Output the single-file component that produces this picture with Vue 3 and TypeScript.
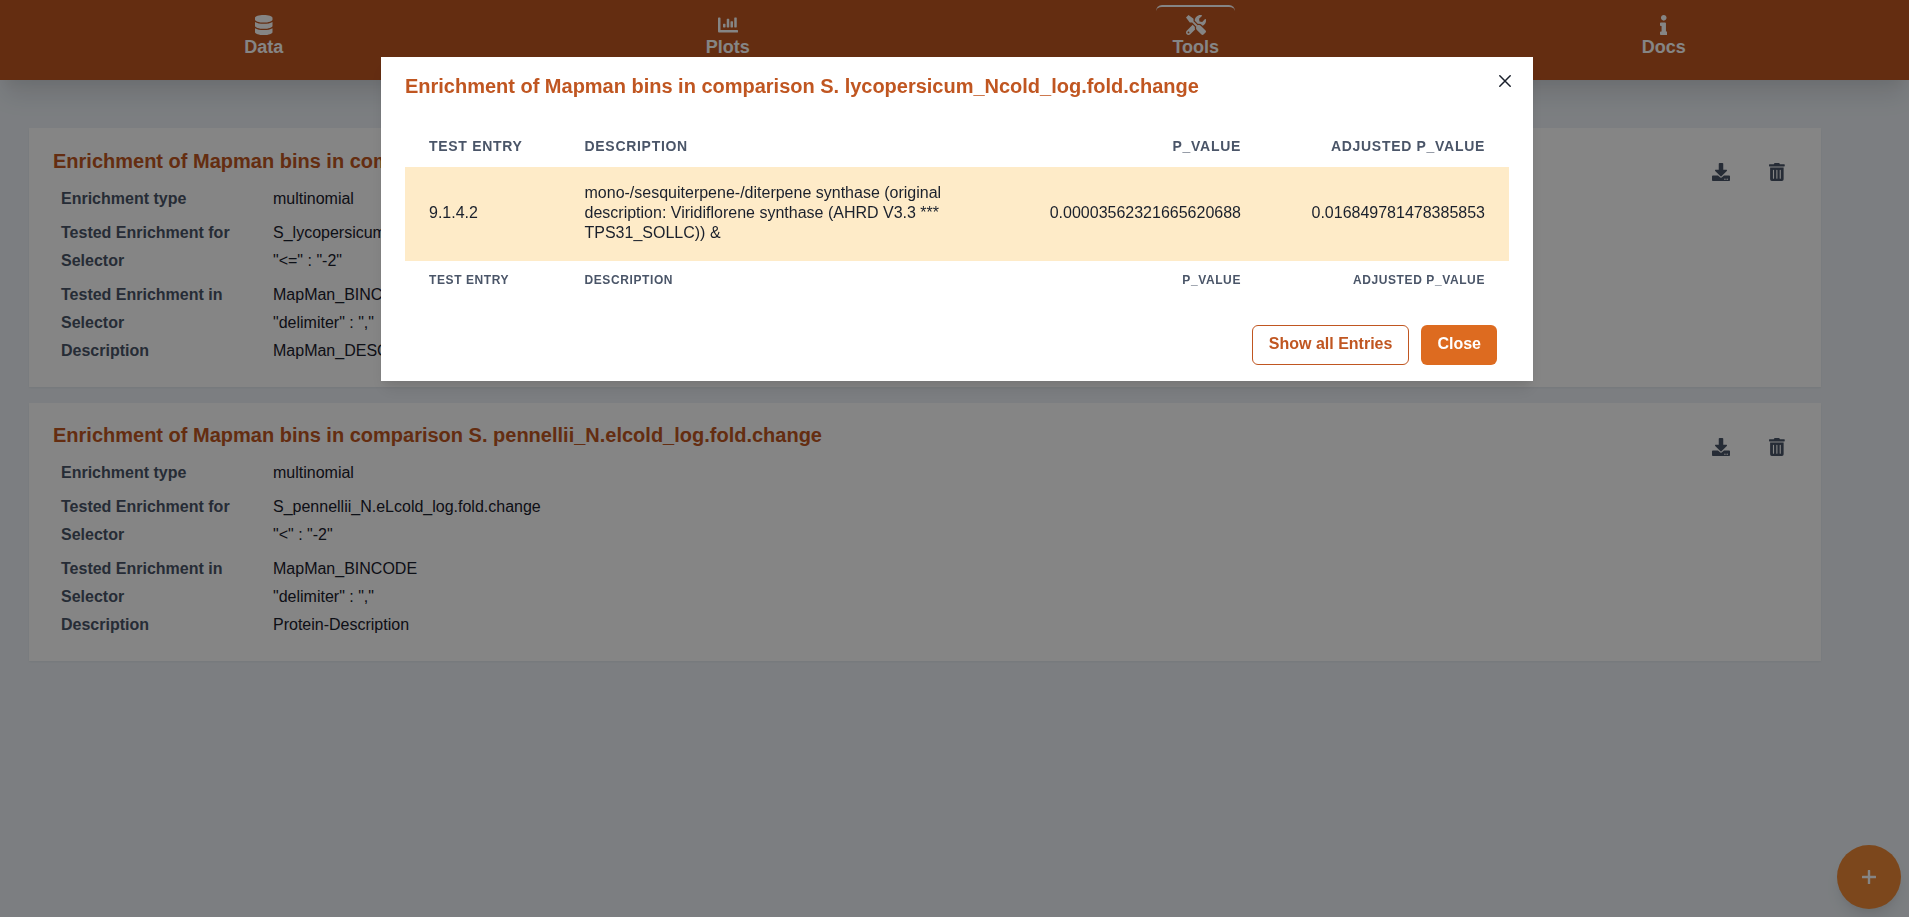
<script setup lang="ts">
interface NavItem {
  label: string
  viewBox: string
  path: string
  active?: boolean
}
interface Field {
  label: string
  value: string
}
interface Enrichment {
  title: string
  groups: Field[][]
}

const navItems: NavItem[] = [
  {
    label: 'Data',
    viewBox: '0 0 448 512',
    path: 'M448 73.143v45.714C448 159.143 347.667 192 224 192S0 159.143 0 118.857V73.143C0 32.857 100.333 0 224 0s224 32.857 224 73.143zM448 176v102.857C448 319.143 347.667 352 224 352S0 319.143 0 278.857V176c48.125 33.143 136.208 48.572 224 48.572S399.874 209.143 448 176zm0 160v102.857C448 479.143 347.667 512 224 512S0 479.143 0 438.857V336c48.125 33.143 136.208 48.572 224 48.572S399.874 369.143 448 336z',
  },
  {
    label: 'Plots',
    viewBox: '0 0 512 512',
    path: 'M332.8 320h38.4c6.4 0 12.8-6.4 12.8-12.8V172.8c0-6.4-6.4-12.8-12.8-12.8h-38.4c-6.4 0-12.8 6.4-12.8 12.8v134.4c0 6.4 6.4 12.8 12.8 12.8zm96 0h38.4c6.4 0 12.8-6.4 12.8-12.8V76.8c0-6.4-6.4-12.8-12.8-12.8h-38.4c-6.4 0-12.8 6.4-12.8 12.8v230.4c0 6.4 6.4 12.8 12.8 12.8zm-288 0h38.4c6.4 0 12.8-6.4 12.8-12.8v-70.4c0-6.4-6.4-12.8-12.8-12.8h-38.4c-6.4 0-12.8 6.4-12.8 12.8v70.4c0 6.4 6.4 12.8 12.8 12.8zm96 0h38.4c6.4 0 12.8-6.4 12.8-12.8V108.8c0-6.4-6.4-12.8-12.8-12.8h-38.4c-6.4 0-12.8 6.4-12.8 12.8v198.4c0 6.4 6.4 12.8 12.8 12.8zM496 384H64V80c0-8.84-7.16-16-16-16H16C7.16 64 0 71.16 0 80v336c0 17.67 14.33 32 32 32h464c8.84 0 16-7.16 16-16v-32c0-8.84-7.16-16-16-16z',
  },
  {
    label: 'Tools',
    viewBox: '0 0 512 512',
    path: 'M501.1 395.7L384 278.6c-23.1-23.1-57.6-27.6-85.4-13.9L192 158.1V96L64 0 0 64l96 128h62.1l106.6 106.6c-13.6 27.8-9.2 62.3 13.9 85.4l117.1 117.1c14.6 14.6 38.2 14.6 52.7 0l52.7-52.7c14.5-14.6 14.5-38.2 0-52.7zM331.7 225c28.3 0 54.9 11 74.9 31l19.4 19.4c15.8-6.9 30.8-16.5 43.8-29.5 37.1-37.1 49.7-89.3 37.9-136.7-2.2-9-13.5-12.1-20.1-5.5l-74.4 74.4-67.9-11.3L334 98.9l74.4-74.4c6.6-6.6 3.4-17.9-5.7-20.2-47.4-11.7-99.6.9-136.6 37.9-28.5 28.5-41.9 66.1-41.2 103.6l82.1 82.1c8.1-1.9 16.5-2.9 24.7-2.9zm-103.9 82l-56.7-56.7L18.7 402.8c-25 25-25 65.5 0 90.5s65.5 25 90.5 0l123.6-123.6c-7.6-19.9-9.9-41.6-5-62.7zM64 472c-13.2 0-24-10.8-24-24 0-13.3 10.7-24 24-24s24 10.7 24 24c0 13.2-10.7 24-24 24z',
    active: true,
  },
  {
    label: 'Docs',
    viewBox: '0 0 192 512',
    path: 'M20 424.229h20V279.771H20c-11.046 0-20-8.954-20-20V212c0-11.046 8.954-20 20-20h112c11.046 0 20 8.954 20 20v212.229h20c11.046 0 20 8.954 20 20V492c0 11.046-8.954 20-20 20H20c-11.046 0-20-8.954-20-20v-47.771c0-11.046 8.954-20 20-20zM96 0C56.235 0 24 32.235 24 72s32.235 72 72 72 72-32.235 72-72S135.764 0 96 0z',
  },
]

const enrichments: Enrichment[] = [
  {
    title: 'Enrichment of Mapman bins in comparison S. lycopersicum_Ncold_log.fold.change',
    groups: [
      [{ label: 'Enrichment type', value: 'multinomial' }],
      [
        { label: 'Tested Enrichment for', value: 'S_lycopersicum_Ncold_log.fold.change' },
        { label: 'Selector', value: '"<=" : "-2"' },
      ],
      [
        { label: 'Tested Enrichment in', value: 'MapMan_BINCODE' },
        { label: 'Selector', value: '"delimiter" : ","' },
        { label: 'Description', value: 'MapMan_DESCRIPTION' },
      ],
    ],
  },
  {
    title: 'Enrichment of Mapman bins in comparison S. pennellii_N.elcold_log.fold.change',
    groups: [
      [{ label: 'Enrichment type', value: 'multinomial' }],
      [
        { label: 'Tested Enrichment for', value: 'S_pennellii_N.eLcold_log.fold.change' },
        { label: 'Selector', value: '"<" : "-2"' },
      ],
      [
        { label: 'Tested Enrichment in', value: 'MapMan_BINCODE' },
        { label: 'Selector', value: '"delimiter" : ","' },
        { label: 'Description', value: 'Protein-Description' },
      ],
    ],
  },
]

const columns: string[] = ['Test Entry', 'Description', 'p_value', 'adjusted p_value']
const results: string[][] = [
  [
    '9.1.4.2',
    'mono-/sesquiterpene-/diterpene synthase (original description: Viridiflorene synthase (AHRD V3.3 *** TPS31_SOLLC)) &',
    '0.00003562321665620688',
    '0.016849781478385853',
  ],
]
</script>

<template>
  <div class="page">
    <nav class="navbar">
      <a v-for="item in navItems" :key="item.label" class="nav-item" :class="{ active: item.active }">
        <svg class="nav-icon" :viewBox="item.viewBox" fill="currentColor"><path :d="item.path" /></svg>
        <span class="nav-label">{{ item.label }}</span>
      </a>
    </nav>

    <main class="cards">
      <section v-for="card in enrichments" :key="card.title" class="card">
        <div class="card-body">
          <h2 class="title">{{ card.title }}</h2>
          <dl v-for="(group, g) in card.groups" :key="g" class="group">
            <div v-for="field in group" :key="field.label" class="field">
              <dt>{{ field.label }}</dt>
              <dd>{{ field.value }}</dd>
            </div>
          </dl>
        </div>
        <div class="actions">
          <button class="icon-button" aria-label="Download">
            <svg viewBox="0 0 512 512" fill="currentColor">
              <path d="M216 0h80c13.3 0 24 10.7 24 24v168h87.7c17.8 0 26.7 21.5 14.1 34.1L269.7 378.3c-7.5 7.5-19.8 7.5-27.3 0L90.1 226.1c-12.6-12.6-3.7-34.1 14.1-34.1H192V24c0-13.3 10.7-24 24-24zm296 376v112c0 13.3-10.7 24-24 24H24c-13.3 0-24-10.7-24-24V376c0-13.3 10.7-24 24-24h146.7l49 49c20.1 20.1 52.5 20.1 72.6 0l49-49H488c13.3 0 24 10.7 24 24zm-124 88c0-11-9-20-20-20s-20 9-20 20 9 20 20 20 20-9 20-20zm64 0c0-11-9-20-20-20s-20 9-20 20 9 20 20 20 20-9 20-20z" />
            </svg>
          </button>
          <button class="icon-button" aria-label="Delete">
            <svg viewBox="0 0 448 512" fill="currentColor">
              <path d="M32 464a48 48 0 0 0 48 48h288a48 48 0 0 0 48-48V128H32zm272-256a16 16 0 0 1 32 0v224a16 16 0 0 1-32 0zm-96 0a16 16 0 0 1 32 0v224a16 16 0 0 1-32 0zm-96 0a16 16 0 0 1 32 0v224a16 16 0 0 1-32 0zM432 32H312l-9.4-18.7A24 24 0 0 0 281.1 0H166.8a23.72 23.72 0 0 0-21.4 13.3L136 32H16A16 16 0 0 0 0 48v32a16 16 0 0 0 16 16h416a16 16 0 0 0 16-16V48a16 16 0 0 0-16-16z" />
            </svg>
          </button>
        </div>
      </section>
    </main>

    <button class="fab" aria-label="Add enrichment">
      <svg viewBox="0 0 14 14" fill="currentColor">
        <path d="M6.3 0h1.4q.5 0 .5.5v5.3h5.3q.5 0 .5.5v1.4q0 .5-.5.5H8.2v5.3q0 .5-.5.5H6.3q-.5 0-.5-.5V8.200H.5Q0 8.200 0 7.700V6.300q0-.5.5-.5h5.300V.5q0-.5.5-.5z" />
      </svg>
    </button>

    <div class="overlay">
      <div class="modal" role="dialog">
        <header class="modal-header">
          <h2 class="title">{{ enrichments[0].title }}</h2>
          <button class="close-icon" aria-label="Close dialog">
            <svg viewBox="0 0 12 12" fill="none" stroke="currentColor" stroke-width="1.5" stroke-linecap="round">
              <path d="M.8.8l10.4 10.4M11.2.8L.8 11.2" />
            </svg>
          </button>
        </header>
        <table class="results">
          <colgroup>
            <col class="col-entry" />
            <col class="col-description" />
            <col class="col-p" />
            <col class="col-adjusted" />
          </colgroup>
          <thead>
            <tr>
              <th v-for="(name, i) in columns" :key="name" :class="{ numeric: i > 1 }">{{ name }}</th>
            </tr>
          </thead>
          <tbody>
            <tr v-for="row in results" :key="row[0]">
              <td v-for="(cell, i) in row" :key="i" :class="{ numeric: i > 1 }">{{ cell }}</td>
            </tr>
          </tbody>
          <tfoot>
            <tr>
              <th v-for="(name, i) in columns" :key="name" :class="{ numeric: i > 1 }">{{ name }}</th>
            </tr>
          </tfoot>
        </table>
        <footer class="modal-footer">
          <button class="button outline">Show all Entries</button>
          <button class="button solid">Close</button>
        </footer>
      </div>
    </div>
  </div>
</template>

<style>
body {
  margin: 0;
  background: #edf2f7;
}
</style>

<style scoped>
* {
  box-sizing: border-box;
}
.page {
  min-height: 100vh;
  font-family: 'Liberation Sans', Arial, sans-serif;
  font-size: 16px;
  color: #1a202c;
}
button {
  border: 0;
  background: none;
  font: inherit;
}
.navbar {
  height: 80px;
  display: flex;
  justify-content: space-around;
  align-items: flex-start;
  padding: 5px 12px 0 33px;
  background: #c05621;
  box-shadow: 0 20px 25px -5px rgba(0, 0, 0, 0.1), 0 10px 10px -5px rgba(0, 0, 0, 0.04);
  color: #fff;
}
.nav-item {
  display: flex;
  flex-direction: column;
  align-items: center;
  padding: 8px 16px 0;
  height: 62px;
  border-top: 2px solid transparent;
  border-radius: 6px;
}
.nav-item.active {
  border-top-color: #fff;
}
.nav-icon {
  height: 20px;
}
.nav-label {
  margin-top: 2px;
  font-size: 18px;
  font-weight: 700;
  line-height: 20px;
}
.cards {
  display: flex;
  flex-direction: column;
  gap: 16px;
  padding: 48px 88px 0 29px;
}
.card {
  display: flex;
  justify-content: space-between;
  height: 258.6px;
  padding: 20.5px 36px 0 24px;
  background: #fff;
  box-shadow: 0 1px 2px rgba(0, 0, 0, 0.05);
}
.title {
  margin: 0;
  font-size: 20px;
  font-weight: 700;
  line-height: 24px;
  color: #c05621;
}
.group {
  margin: 0 0 6px;
  padding-left: 8px;
}
.card-body .title {
  margin-bottom: 12px;
}
.field {
  display: flex;
  height: 28px;
  line-height: 28px;
}
.field dt {
  width: 212px;
  font-weight: 700;
  color: #4a5568;
}
.field dd {
  margin: 0;
}
.actions {
  display: flex;
  align-items: flex-start;
  gap: 39px;
  padding-top: 14.5px;
}
.icon-button {
  display: flex;
  padding: 0;
  color: #4a5568;
}
.icon-button svg {
  height: 18px;
}
.fab {
  position: fixed;
  right: 8px;
  bottom: 8px;
  width: 64px;
  height: 64px;
  display: flex;
  align-items: center;
  justify-content: center;
  padding: 0;
  border-radius: 50%;
  background: #ed8936;
  color: #fff;
  box-shadow: 0 10px 15px -3px rgba(0, 0, 0, 0.1), 0 4px 6px -2px rgba(0, 0, 0, 0.05);
}
.fab svg {
  width: 14px;
  height: 14px;
}
.overlay {
  position: fixed;
  inset: 0;
  display: flex;
  justify-content: center;
  align-items: flex-start;
  padding: 57px 0 0 5px;
  background: rgba(0, 0, 0, 0.48);
}
.modal {
  width: 1152px;
  height: 324px;
  display: flex;
  flex-direction: column;
  padding: 0 24px 16px;
  background: #fff;
  box-shadow: 0 10px 15px -3px rgba(0, 0, 0, 0.1), 0 4px 6px -2px rgba(0, 0, 0, 0.05);
}
.modal-header {
  display: flex;
  justify-content: space-between;
  align-items: flex-start;
  height: 68px;
  padding-top: 17px;
}
.modal-header .title {
  letter-spacing: -0.01px;
}
.close-icon {
  display: flex;
  padding: 1px 0 0;
  margin-right: -2px;
  color: #1a202c;
}
.close-icon svg {
  width: 12px;
  height: 12px;
}
.results {
  width: 1104px;
  table-layout: fixed;
  border-collapse: collapse;
}
.col-entry {
  width: 155.5px;
}
.col-description {
  width: 434.5px;
}
.col-p {
  width: 270px;
}
.col-adjusted {
  width: 244px;
}
th {
  padding: 0 24px;
  text-align: left;
  text-transform: uppercase;
  letter-spacing: 0.05em;
  color: #4a5568;
}
thead th {
  height: 42px;
  padding-bottom: 1px;
  font-size: 14px;
  line-height: 20px;
}
tfoot th {
  height: 38px;
  font-size: 12px;
  line-height: 16px;
}
td {
  padding: 16px 24px 18px;
  background: #feebc8;
  line-height: 20px;
}
.numeric {
  text-align: right;
}
.modal-footer {
  display: flex;
  justify-content: flex-end;
  gap: 12px;
  margin-top: auto;
  padding-right: 12px;
}
.button {
  height: 40px;
  padding: 0 16px 3px;
  border-radius: 6px;
  font-weight: 700;
}
.button.outline {
  border: 1px solid #c05621;
  color: #c05621;
}
.button.solid {
  background: #dd6b20;
  color: #fff;
}
</style>
